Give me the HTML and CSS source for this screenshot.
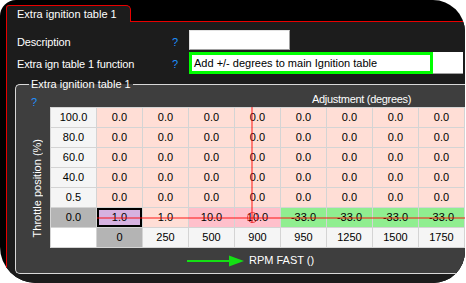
FILE: index.html
```html
<!DOCTYPE html>
<html>
<head>
<meta charset="utf-8">
<link rel="stylesheet" href="styles.css">
</head>
<body>
<div class="window">
  <div class="tabstrip">
    <div class="tab">Extra ignition table 1</div>
    <div class="tabfill"></div>
  </div>
  <div class="panel">
    <div class="form-row r1">
      <span class="label">Description</span>
      <span class="help">?</span>
      <div class="textbox small"></div>
    </div>
    <div class="form-row r2">
      <span class="label">Extra ign table 1 function</span>
      <span class="help">?</span>
      <div class="textbox wide"><div class="focusbox">Add +/- degrees to main Ignition table</div></div>
    </div>
    <fieldset class="group">
      <legend>Extra ignition table 1</legend>
      <div class="group-grid">
        <div class="corner-help">?</div>
        <div class="axis-title">Adjustment (degrees)</div>
        <div class="y-title"><span>Throttle position (%)</span></div>
        <div class="table-wrap">
          <div class="table">
            <div class="c lbl">100.0</div><div class="c">0.0</div><div class="c">0.0</div><div class="c">0.0</div><div class="c">0.0</div><div class="c">0.0</div><div class="c">0.0</div><div class="c">0.0</div><div class="c">0.0</div>
            <div class="c lbl">80.0</div><div class="c">0.0</div><div class="c">0.0</div><div class="c">0.0</div><div class="c">0.0</div><div class="c">0.0</div><div class="c">0.0</div><div class="c">0.0</div><div class="c">0.0</div>
            <div class="c lbl">60.0</div><div class="c">0.0</div><div class="c">0.0</div><div class="c">0.0</div><div class="c">0.0</div><div class="c">0.0</div><div class="c">0.0</div><div class="c">0.0</div><div class="c">0.0</div>
            <div class="c lbl">40.0</div><div class="c">0.0</div><div class="c">0.0</div><div class="c">0.0</div><div class="c">0.0</div><div class="c">0.0</div><div class="c">0.0</div><div class="c">0.0</div><div class="c">0.0</div>
            <div class="c lbl">0.5</div><div class="c">0.0</div><div class="c">0.0</div><div class="c">0.0</div><div class="c">0.0</div><div class="c">0.0</div><div class="c">0.0</div><div class="c">0.0</div><div class="c">0.0</div>
            <div class="c gray">0.0</div><div class="c sel">1.0</div><div class="c">1.0</div><div class="c pink">10.0</div><div class="c pink">10.0</div><div class="c green">-33.0</div><div class="c green">-33.0</div><div class="c green">-33.0</div><div class="c green">-33.0</div>
            <div class="c blank"></div><div class="c gray">0</div><div class="c lbl">250</div><div class="c lbl">500</div><div class="c lbl">900</div><div class="c lbl">950</div><div class="c lbl">1250</div><div class="c lbl">1500</div><div class="c lbl">1750</div>
          </div>
          <div class="cross-v"></div>
          <div class="cross-h"></div>
          <div class="cross-dot"></div>
        </div>
        <div class="x-title">
          <svg class="arrow" width="57" height="12" viewBox="0 0 57 12"><line x1="0" y1="6" x2="44" y2="6" stroke="#14e014" stroke-width="2"/><polygon points="42,0.5 57,6 42,11.5" fill="#14e014"/></svg>
          <span>RPM FAST ()</span>
        </div>
      </div>
    </fieldset>
  </div>
</div>
</body>
</html>
```
FILE: styles.css
```css
body {
  margin: 0;
  background: #fff;
  font-family: "Liberation Sans", Arial, sans-serif;
  font-size: 11px;
}
.window {
  width: 465px;
  height: 283px;
  background: #000;
  border-radius: 16px 32px 32px 36px;
  overflow: hidden;
  display: flex;
  flex-direction: column;
}
.tabstrip {
  display: flex;
  height: 22px;
  padding-top: 5px;
  box-sizing: border-box;
  flex: none;
}
.tab {
  margin-left: 6px;
  width: 125px;
  height: 17px;
  box-sizing: border-box;
  border: 1px solid #e80000;
  border-bottom: 0;
  border-radius: 3px 5px 0 0;
  background: #1c1c1c;
  color: #fff;
  padding: 2px 0 0 10px;
  line-height: 13px;
  white-space: nowrap;
}
.tabfill {
  flex: 1;
  height: 17px;
  box-sizing: border-box;
  border-bottom: 1px solid #e80000;
}
.panel {
  flex: 1;
  margin-left: 6px;
  border-left: 1px solid #e80000;
  background: #1c1c1c;
}
.form-row {
  display: flex;
  padding-left: 10px;
}
.r1 { margin-top: 8px; height: 20px; }
.r2 { margin-top: 2px; height: 22px; }
.label {
  width: 155px;
  color: #fff;
  line-height: 13px;
  padding-top: 6px;
  white-space: nowrap;
  letter-spacing: -0.15px;
}
.help {
  width: 17px;
  color: #1e90ff;
  line-height: 13px;
  padding-top: 6px;
}
.textbox {
  background: #fff;
  box-sizing: border-box;
}
.small {
  width: 101px;
  height: 20px;
  border: 1px solid #a0a0a0;
  border-top-color: #e3e3e3;
  border-left-color: #e3e3e3;
}
.wide {
  width: 274px;
  height: 22px;
  border-bottom: 1px solid #a0a0a0;
}
.focusbox {
  width: 244px;
  height: 22px;
  box-sizing: border-box;
  border: 3px solid #00ff00;
  padding-left: 2px;
  line-height: 16px;
  color: #000;
  white-space: nowrap;
}
.group {
  margin: 4px -20px 0 8px;
  padding: 0;
  border: 1px solid #d8d8d8;
  border-right: 0;
  border-radius: 5px 0 0 5px;
  background: #3e3e3e;
  min-width: 0;
}
.group legend {
  margin-left: 13px;
  padding: 0 2px;
  color: #fff;
  line-height: 13px;
}
.group-grid {
  display: grid;
  grid-template-columns: 34px 415px;
  grid-template-rows: 16px 141px 25px;
}
.corner-help {
  color: #1e90ff;
  padding: 5px 0 0 15px;
  line-height: 13px;
}
.axis-title {
  color: #fff;
  padding: 2px 0 0 262px;
  line-height: 13px;
  white-space: nowrap;
  letter-spacing: -0.3px;
}
.y-title {
  display: flex;
  flex-direction: column;
  justify-content: flex-end;
  align-items: flex-start;
  padding: 0 0 11px 15px;
}
.y-title span {
  writing-mode: vertical-rl;
  transform: rotate(180deg);
  color: #fff;
  line-height: 13px;
  white-space: nowrap;
}
.table-wrap {
  position: relative;
}
.table {
  display: grid;
  grid-template-columns: repeat(9, 46px);
  grid-auto-rows: 20px;
  border-top: 1px solid #d4d4d4;
  border-left: 1px solid #d4d4d4;
  width: max-content;
}
.c {
  box-sizing: border-box;
  border-right: 1px solid #d4d4d4;
  border-bottom: 1px solid #d4d4d4;
  text-align: center;
  line-height: 19px;
  background: #ffded6;
  color: #000;
}
.c.lbl { background: #f5f5f5; }
.c.gray { background: #b4b4b4; }
.c.blank { background: #fff; }
.c.pink { background: #ffc0cb; }
.c.green { background: #90ee90; }
.c.sel {
  background: #d6b2e0;
  box-shadow: inset 0 0 0 2px #000;
}
.cross-v {
  position: absolute;
  left: 201px;
  top: 0;
  width: 2px;
  height: 116px;
  background: rgba(255, 0, 0, 0.45);
}
.cross-h {
  position: absolute;
  left: 47px;
  right: -2px;
  top: 110px;
  height: 2px;
  background: rgba(255, 0, 0, 0.45);
}
.cross-dot {
  position: absolute;
  left: 197px;
  top: 105px;
  width: 11px;
  height: 11px;
  box-sizing: border-box;
  border: 1.5px solid rgba(230, 30, 30, 0.8);
  border-radius: 50%;
}
.x-title {
  grid-column: 2;
  display: flex;
  align-items: center;
  gap: 5px;
  padding-left: 137px;
  color: #fff;
  line-height: 13px;
  white-space: nowrap;
}
.arrow { display: block; }
```
